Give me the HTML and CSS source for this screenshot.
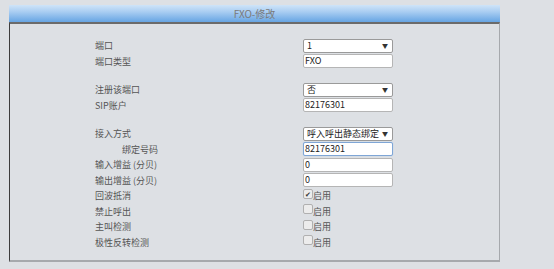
FILE: index.html
```html
<!DOCTYPE html>
<html>
<head>
<meta charset="utf-8">
<link rel="stylesheet" href="styles.css">
</head>
<body>
<div class="panel">
  <div class="panel-head">FXO-修改</div>
  <div class="panel-body">
    <div class="group">
      <div class="row"><span class="label">端口</span><div class="select"><span>1</span><span class="arrow">▼</span></div></div>
      <div class="row"><span class="label">端口类型</span><div class="input">FXO</div></div>
    </div>
    <div class="group">
      <div class="row"><span class="label">注册该端口</span><div class="select"><span>否</span><span class="arrow">▼</span></div></div>
      <div class="row"><span class="label">SIP账户</span><div class="input">82176301</div></div>
    </div>
    <div class="group">
      <div class="row"><span class="label">接入方式</span><div class="select"><span>呼入呼出静态绑定</span><span class="arrow">▼</span></div></div>
      <div class="row"><span class="label indent">绑定号码</span><div class="input focus">82176301</div></div>
      <div class="row"><span class="label">输入增益 (分贝)</span><div class="input">0</div></div>
      <div class="row"><span class="label">输出增益 (分贝)</span><div class="input">0</div></div>
      <div class="row"><span class="label">回波抵消</span><div class="check"><span class="box checked">✔</span>启用</div></div>
      <div class="row"><span class="label">禁止呼出</span><div class="check"><span class="box"></span>启用</div></div>
      <div class="row"><span class="label">主叫检测</span><div class="check"><span class="box"></span>启用</div></div>
      <div class="row"><span class="label">极性反转检测</span><div class="check"><span class="box"></span>启用</div></div>
    </div>
  </div>
</div>
</body>
</html>
```
FILE: styles.css
```css
html, body {
  margin: 0;
  padding: 0;
  background: #dde0e4;
  font-family: "Noto Sans CJK SC", "DejaVu Sans", sans-serif;
  font-size: 9px;
  color: #555;
}
.panel {
  margin: 5px 0 0 9px;
  width: 491px;
}
.panel-head {
  height: 17px;
  line-height: 17px;
  text-align: center;
  color: #7a7a7a;
  font-size: 10px;
  background: linear-gradient(#cfe4f8, #a9cdf2 40%, #67a5e3);
}
.panel-body {
  border-top: 2px solid #6b6b6b;
  border-left: 1px solid #3d3d3d;
  border-right: 1px solid #a6a9ad;
  border-bottom: 2px solid #a6a9ad;
  padding: 14px 0 0 85px;
  height: 240px;
  box-sizing: border-box;
}
.group {
  margin-bottom: 13px;
}
.row {
  display: flex;
  align-items: center;
  height: 15.5px;
  white-space: nowrap;
}
.label {
  width: 208px;
  flex: none;
}
.indent {
  padding-left: 27px;
  width: 181px;
}
.select, .input {
  width: 87px;
  height: 12px;
  background: #fff;
  border: 1px solid #b5b5b5;
  border-radius: 2px;
  box-sizing: content-box;
  font-size: 9px;
  line-height: 12px;
  color: #222;
  padding: 0 0 0 1px;
  overflow: hidden;
}
.select {
  display: flex;
  justify-content: space-between;
  border-color: #9a9a9a;
  padding-left: 3px;
  width: 85px;
}
.arrow {
  font-size: 6px;
  color: #333;
  padding-right: 4px;
  flex: none;
}
.focus {
  border-color: #7fa6d6;
  box-shadow: 0 0 1px #9cc0ea;
}
.check {
  display: flex;
  align-items: center;
  color: #555;
}
.box {
  width: 8px;
  height: 8px;
  border: 1px solid #b0b0b0;
  border-radius: 2px;
  background: #ececec;
  font-size: 7px;
  line-height: 8px;
  text-align: center;
  color: #333;
  margin-top: -4px;
}
```
